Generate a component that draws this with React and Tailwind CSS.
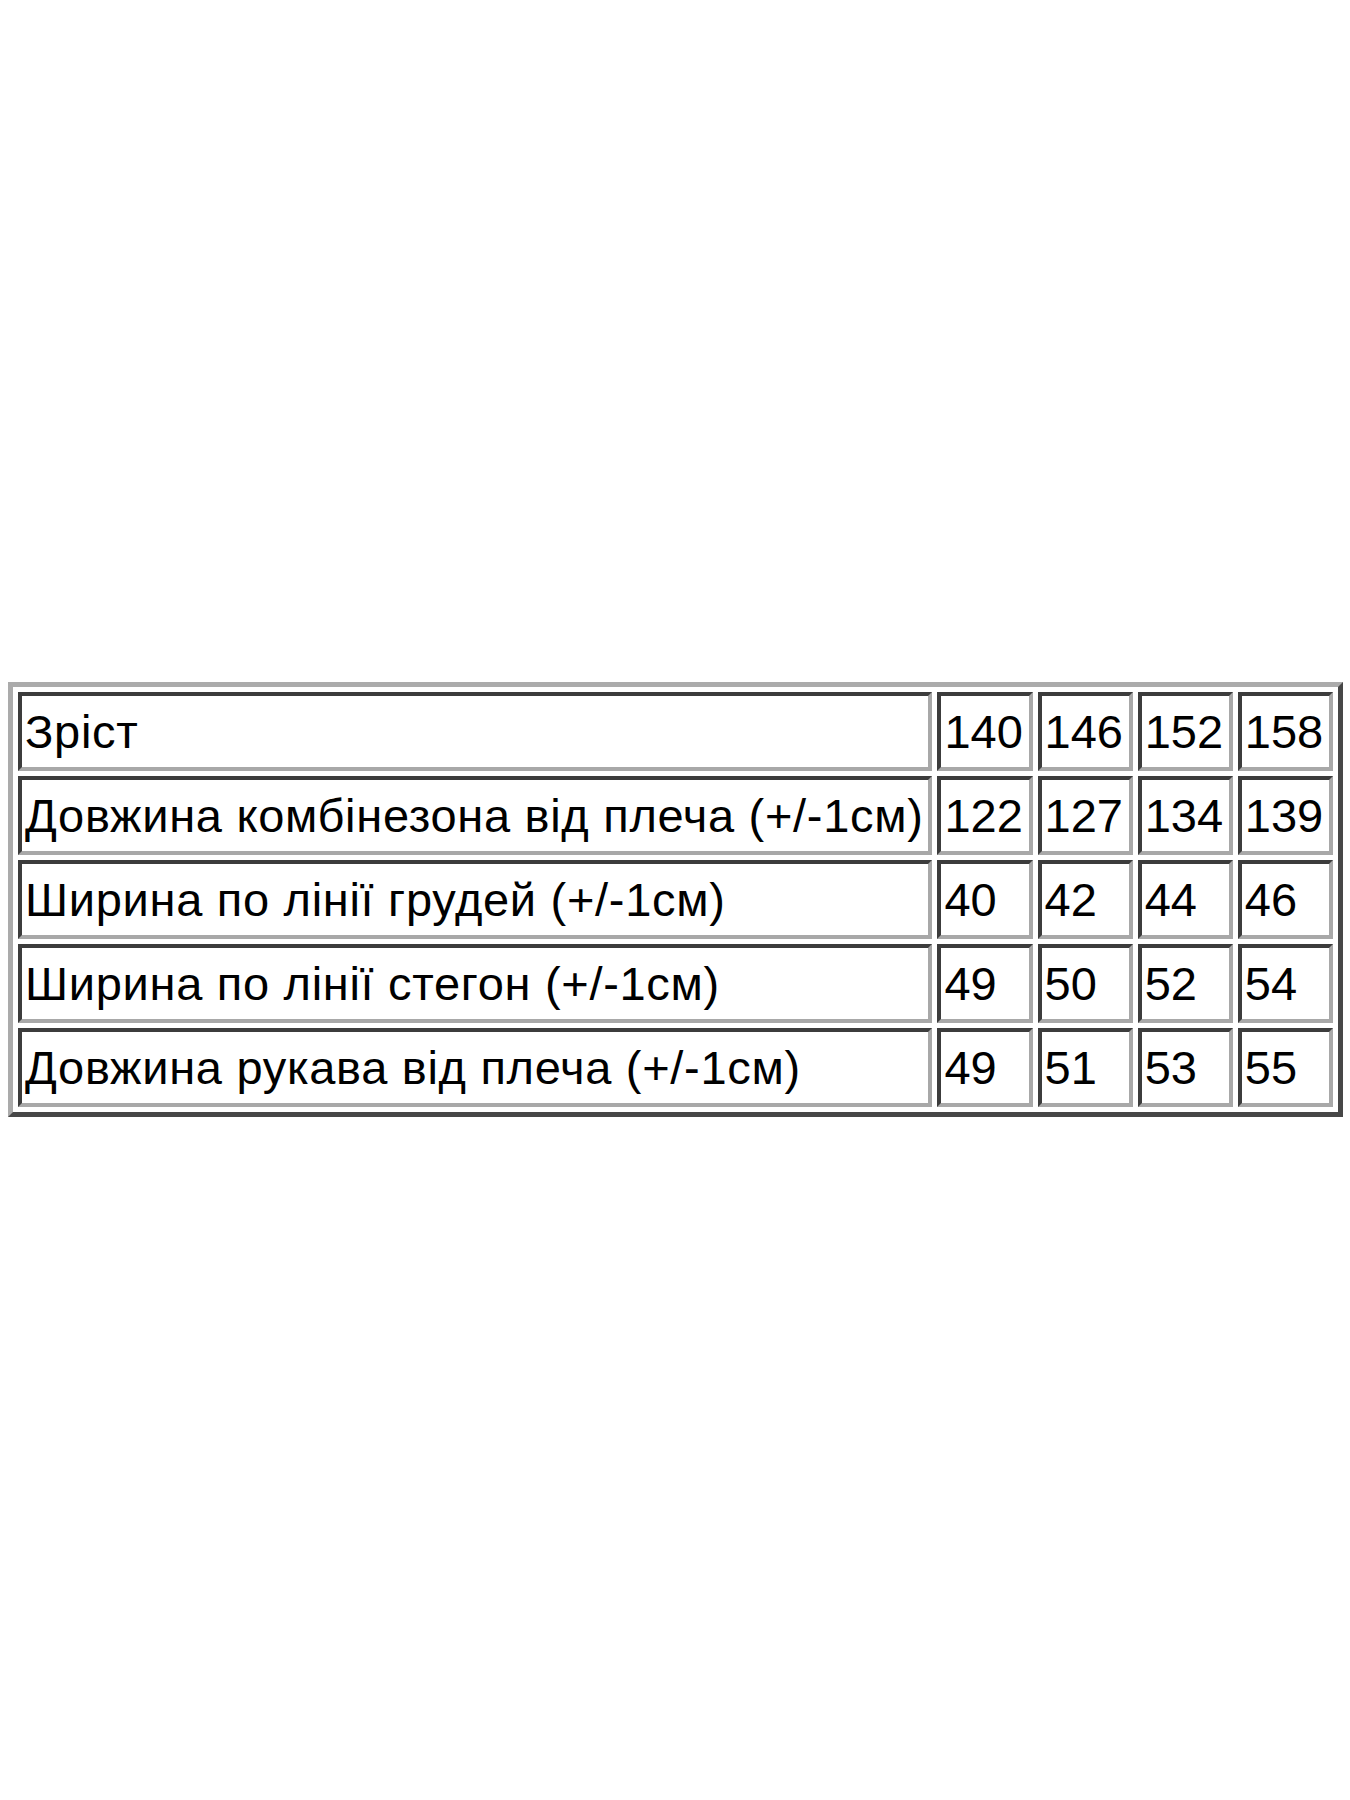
const header = ['140', '146', '152', '158']

const rows = [
  { label: 'Довжина комбінезона від плеча (+/-1см)', values: ['122', '127', '134', '139'] },
  { label: 'Ширина по лінії грудей (+/-1см)', values: ['40', '42', '44', '46'] },
  { label: 'Ширина по лінії стегон (+/-1см)', values: ['49', '50', '52', '54'] },
  { label: 'Довжина рукава від плеча (+/-1см)', values: ['49', '51', '53', '55'] },
]

const cell =
  'h-[79px] border-[4px] border-t-[#3c3c3c] border-l-[#3c3c3c] border-r-[#a8a8a8] border-b-[#a8a8a8] px-[3px] align-middle whitespace-nowrap text-left'

export default function App() {
  const allRows = [{ label: 'Зріст', values: header }, ...rows]

  return (
    <div className="min-h-[1800px] w-[1350px] bg-white pt-[682px] pl-[8px] text-black font-['Liberation_Sans',Arial,sans-serif]">
      <table className="table-fixed w-[1335px] border-separate border-spacing-[5px] border-[5px] border-t-[#ababab] border-l-[#ababab] border-r-[#474747] border-b-[#474747] text-[47px] leading-none">
        <colgroup>
          <col className="w-[913px]" />
          <col className="w-[95px]" />
          <col className="w-[95px]" />
          <col className="w-[95px]" />
          <col className="w-[95px]" />
        </colgroup>
        <tbody>
          {allRows.map((row) => (
            <tr key={row.label}>
              <td className={`${cell} tracking-[0.7px]`}>{row.label}</td>
              {row.values.map((v, i) => (
                <td key={i} className={cell}>{v}</td>
              ))}
            </tr>
          ))}
        </tbody>
      </table>
    </div>
  )
}
